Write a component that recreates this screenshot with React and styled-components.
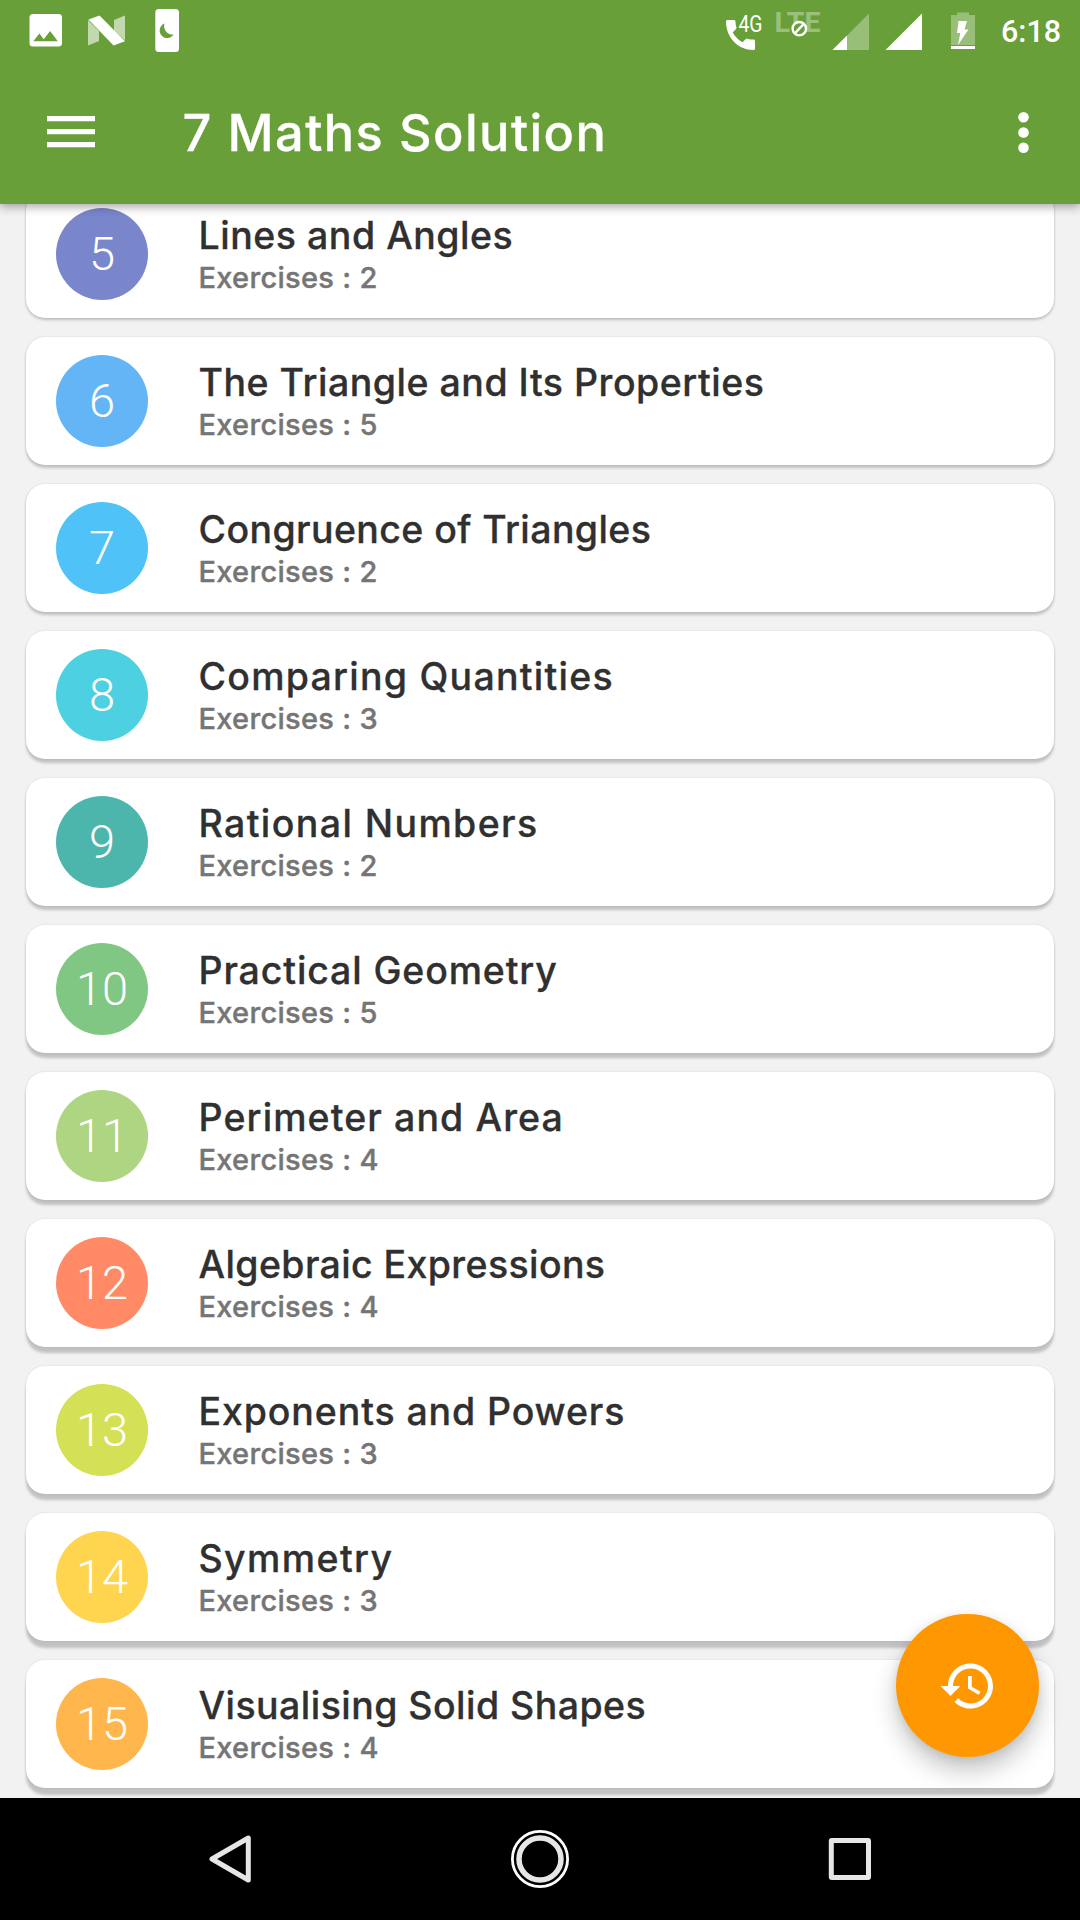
import styled, { createGlobalStyle } from "styled-components";

const Green = "#689f38";

const GlobalStyle = createGlobalStyle`
  body {
    margin: 0;
    background: #000;
  }
  * {
    box-sizing: border-box;
  }
`;

const Screen = styled.div`
  position: relative;
  display: flex;
  flex-direction: column;
  width: 1080px;
  height: 1920px;
  overflow: hidden;
  background: #f2f2f2;
  font-family: Inter, "Liberation Sans", sans-serif;
  svg {
    display: block;
    flex-shrink: 0;
  }
`;

const Header = styled.header`
  position: relative;
  z-index: 1;
  flex-shrink: 0;
  height: 204px;
  background: ${Green};
  color: #fff;
  box-shadow: 0 3px 9px rgba(0, 0, 0, 0.34);
`;

const StatusBar = styled.div`
  display: flex;
  align-items: center;
  justify-content: space-between;
  height: 60px;
  padding: 0 20px 0 29px;
`;

const Notifications = styled.div`
  display: flex;
  gap: 26px;
`;

const Indicators = styled.div`
  display: flex;
  align-items: center;
`;

const Network = styled.svg`
  margin-right: 10px;
  font-family: Roboto, sans-serif;
`;

const Clock = styled.span`
  width: 59px;
  margin-left: 25px;
  padding-top: 3px;
  font-family: Roboto, sans-serif;
  font-size: 30.5px;
  font-weight: 500;
  line-height: 36px;
  white-space: nowrap;
`;

const Toolbar = styled.div`
  display: flex;
  align-items: center;
  height: 144px;
  padding: 0 50px 0 47px;
`;

const Title = styled.h1`
  flex: 1;
  margin: 0;
  padding: 2px 0 0 87.5px;
  font-size: 50.5px;
  font-weight: 500;
  letter-spacing: 1.4px;
  line-height: 60px;
  white-space: nowrap;
  -webkit-text-stroke: 0.3px;
`;

const List = styled.main`
  flex: 1;
  min-height: 0;
  display: flex;
  flex-direction: column;
  gap: 19px;
  padding: 0 26px;
  margin-top: -14px;
  overflow: hidden;
`;

const Card = styled.div`
  display: flex;
  align-items: center;
  flex-shrink: 0;
  height: 128px;
  padding: 0 30px;
  border-radius: 19px;
  background: #fff;
  box-shadow: 0 ${(p) => p.$depth}px 3px rgba(0, 0, 0, 0.2),
    0 0 2px rgba(0, 0, 0, 0.12);
`;

const Circle = styled.div`
  display: flex;
  align-items: center;
  justify-content: center;
  width: 92px;
  height: 92px;
  border-radius: 50%;
  background: ${(p) => p.$color};
  color: #fff;
  font-family: Roboto, sans-serif;
  font-size: 47px;
  font-weight: 300;
  line-height: 56px;
`;

const Info = styled.div`
  margin-left: 50.5px;
  padding-top: 2px;
  white-space: nowrap;
`;

const Chapter = styled.div`
  color: #303030;
  font-size: 37.5px;
  font-weight: 500;
  letter-spacing: ${(p) => p.$spacing}px;
  line-height: 45px;
  -webkit-text-stroke: 0.3px;
`;

const Exercises = styled.div`
  color: #757575;
  font-size: 29px;
  font-weight: 500;
  letter-spacing: 0.3px;
  line-height: 39px;
  -webkit-text-stroke: 0.4px;
`;

const Fab = styled.button`
  position: absolute;
  right: 41px;
  bottom: 163px;
  z-index: 1;
  display: flex;
  align-items: center;
  justify-content: center;
  width: 143px;
  height: 143px;
  padding: 0;
  border: 0;
  border-radius: 50%;
  background: #ff9800;
  box-shadow: 0 14px 24px rgba(0, 0, 0, 0.22), 0 2px 10px rgba(0, 0, 0, 0.1);
`;

const NavBar = styled.nav`
  position: relative;
  flex-shrink: 0;
  display: flex;
  align-items: center;
  justify-content: space-between;
  height: 122px;
  padding: 0 200px;
  background: #000;
`;

const chapters = [
  { no: 5, name: "Lines and Angles", count: 2, color: "#7986cb", spacing: 0.52 },
  { no: 6, name: "The Triangle and Its Properties", count: 5, color: "#64b5f6", spacing: 0.51 },
  { no: 7, name: "Congruence of Triangles", count: 2, color: "#4fc3f7", spacing: 0.4 },
  { no: 8, name: "Comparing Quantities", count: 3, color: "#4dd0e1", spacing: 1.25 },
  { no: 9, name: "Rational Numbers", count: 2, color: "#4db6ac", spacing: 1.4 },
  { no: 10, name: "Practical Geometry", count: 5, color: "#81c784", spacing: 0.86 },
  { no: 11, name: "Perimeter and Area", count: 4, color: "#aed581", spacing: 1.1 },
  { no: 12, name: "Algebraic Expressions", count: 4, color: "#ff8a65", spacing: 0.38 },
  { no: 13, name: "Exponents and Powers", count: 3, color: "#d4e157", spacing: 0.88 },
  { no: 14, name: "Symmetry", count: 3, color: "#ffd54f", spacing: 1.4 },
  { no: 15, name: "Visualising Solid Shapes", count: 4, color: "#ffb74d", spacing: 0.45 },
];

const StatusIcons = () => (
  <StatusBar>
    <Notifications>
      <svg width="33" height="60" viewBox="29 0 33 60" fill="#fff">
        <path
          fillRule="evenodd"
          d="M33 14h25.500a3.500 3.500 0 0 1 3.500 3.500v25.500a3.500 3.500 0 0 1-3.500 3.500h-25.500a3.500 3.500 0 0 1-3.500-3.500v-25.500a3.500 3.500 0 0 1 3.500-3.500zM33.300 41.200h24.500l-7.700-10.200-6.400 8.200-4.300-5.700z"
        />
      </svg>
      <svg width="37" height="60" viewBox="88 0 37 60" fill="#fff">
        <path d="M88 20l11 11v10l-11 4.500zM125 15.500v25l-11-10v-10.500z" opacity="0.6" />
        <path d="M88.500 19.500L99.500 15.500 125 41.200 113.500 45.500z" />
      </svg>
      <svg width="29" height="60" viewBox="151 0 29 60">
        <rect x="155.300" y="9" width="23.700" height="43" rx="3.500" fill="#fff" />
        <path d="M164.500 23.500a7.500 7.500 0 1 0 9 11a8.500 8.500 0 0 1-9-11z" fill={Green} />
      </svg>
    </Notifications>
    <Indicators>
      <Network width="98" height="60" viewBox="724 0 98 60" fill="#fff">
        <path d="M727.500 20h6.500c.9 0 1.500.6 1.500 1.500 0 2 .3 4 .9 5.800.2.600 0 1.200-.4 1.600l-3.300 3.600c2.300 4.200 5.700 7.500 9.900 9.800l3.200-3.200c.4-.4 1-.5 1.600-.4 1.900.6 3.900.9 6 .9.900 0 1.600.7 1.600 1.600v7.200c0 .9-.7 1.600-1.600 1.600-15.200 0-27.400-12.300-27.400-28.500 0-.9.600-1.500 1.500-1.500z" />
        <text x="738.500" y="32" fontSize="23.500" textLength="24" lengthAdjust="spacingAndGlyphs">
          4G
        </text>
        <text
          x="774.500"
          y="32"
          fontSize="27.500"
          fontWeight="700"
          opacity="0.34"
          textLength="46"
          lengthAdjust="spacingAndGlyphs"
        >
          LTE
        </text>
        <circle cx="799.300" cy="28.700" r="6.700" fill={Green} stroke="#fff" strokeWidth="2.400" />
        <path d="M795 33.200l8.600-9" stroke="#fff" strokeWidth="2.400" />
      </Network>
      <svg width="144" height="60" viewBox="832 0 144 60" fill="#fff">
        <path d="M869 13.500v36.500h-36.500z" opacity="0.32" />
        <path d="M847 35.500v14.500h-14.500z" />
        <path d="M922 13.500v36.500h-36.500z" />
        <path d="M951 15h6v-2.500h12v2.500h6v30h-24z" opacity="0.32" />
        <path d="M951 46h24v3h-24z" />
        <path d="M958.500 21h8.500l-2.500 8.500h4l-10.500 15.500 2.300-12h-3.300z" />
      </svg>
      <Clock>6:18</Clock>
    </Indicators>
  </StatusBar>
);

const App = () => {
  return (
    <Screen>
      <GlobalStyle />
      <Header>
        <StatusIcons />
        <Toolbar>
          <svg width="48" height="34" viewBox="0 0 48 34" fill="#fff">
            <path d="M0 1h48v5.300H0zM0 14h48v5.300H0zM0 27h48v5.300H0z" />
          </svg>
          <Title>7 Maths Solution</Title>
          <svg width="13" height="44" viewBox="0 0 13 44" fill="#fff">
            <circle cx="6.500" cy="7.300" r="5.300" />
            <circle cx="6.500" cy="22.500" r="5.300" />
            <circle cx="6.500" cy="37.800" r="5.300" />
          </svg>
        </Toolbar>
      </Header>
      <List>
        {chapters.map((item, index) => (
          <Card key={item.no} $depth={2 + index * 0.45}>
            <Circle $color={item.color}>{item.no}</Circle>
            <Info>
              <Chapter $spacing={item.spacing}>{item.name}</Chapter>
              <Exercises>Exercises : {item.count}</Exercises>
            </Info>
          </Card>
        ))}
      </List>
      <Fab aria-label="History">
        <svg width="60" height="60" viewBox="0 0 24 24" fill="#fff">
          <path d="M13 3c-4.970 0-9 4.030-9 9H1l3.890 3.890.07.14L9 12H6c0-3.870 3.130-7 7-7s7 3.130 7 7-3.130 7-7 7c-1.930 0-3.680-.79-4.940-2.060l-1.420 1.420C8.270 19.990 10.510 21 13 21c4.970 0 9-4.030 9-9s-4.030-9-9-9zm-1 5v5l4.280 2.540.72-1.210-3.500-2.080V8H12z" />
        </svg>
      </Fab>
      <NavBar>
        <svg width="60" height="60" viewBox="200 1829 60 60" fill="none">
          <path
            d="M212 1859L248.300 1838v42z"
            stroke="#e6e6e6"
            strokeWidth="5"
            strokeLinejoin="round"
          />
        </svg>
        <svg width="60" height="60" viewBox="0 0 60 60" fill="none">
          <circle cx="30" cy="30" r="27.600" stroke="#fff" strokeWidth="2.800" />
          <circle cx="30" cy="30" r="21" stroke="#e6e6e6" strokeWidth="5.500" />
        </svg>
        <svg width="60" height="60" viewBox="820 1829 60 60" fill="none">
          <rect
            x="831.300"
            y="1840.500"
            width="37.200"
            height="37"
            rx="0.500"
            stroke="#e6e6e6"
            strokeWidth="5"
            strokeLinejoin="round"
          />
        </svg>
      </NavBar>
    </Screen>
  );
};

export default App;
